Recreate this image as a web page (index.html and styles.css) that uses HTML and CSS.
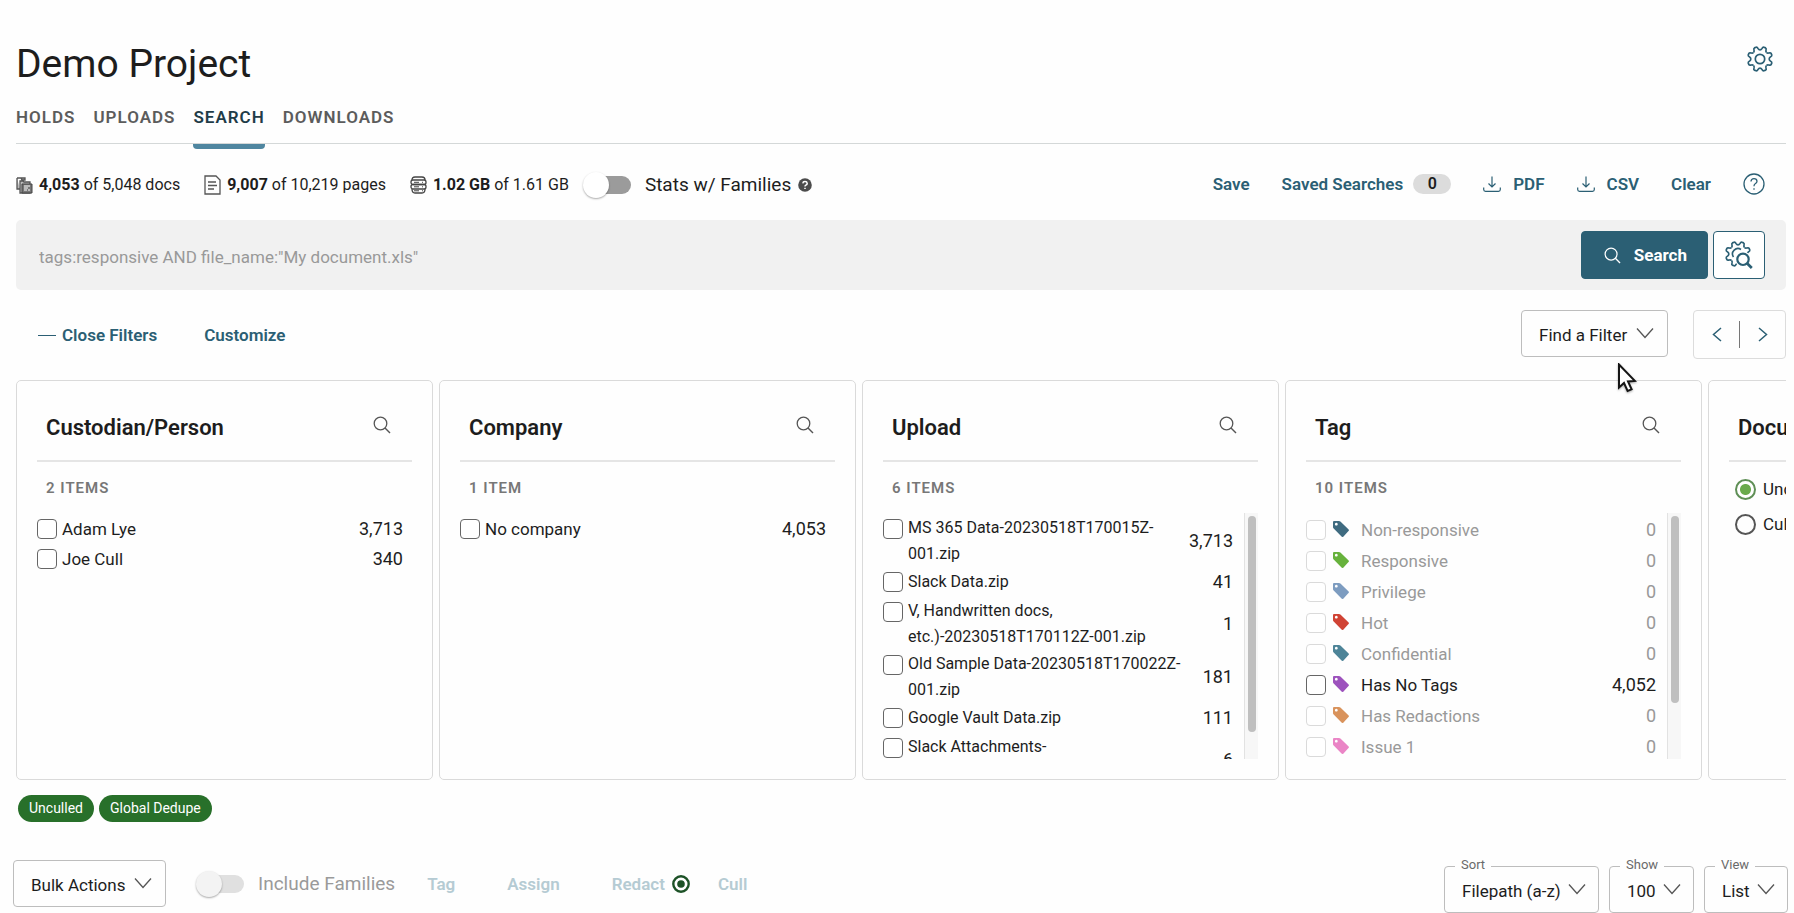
FILE: index.html
```html
<!DOCTYPE html>
<html lang="en">
<head>
<meta charset="utf-8">
<title>Demo Project</title>
<link rel="stylesheet" href="styles.css">
</head>
<body>
<svg class="defs" aria-hidden="true">
  <symbol id="chevron" viewBox="0 0 18 12"><path d="M1 1.500 9 10.500 17 1.500" fill="none" stroke="currentColor" stroke-width="1.300"/></symbol>
  <symbol id="lens" viewBox="0 0 18 18"><circle cx="7.500" cy="7.500" r="6.300" fill="none" stroke="currentColor" stroke-width="1.300"/><path d="M12 12 17 17" stroke="currentColor" stroke-width="1.400"/></symbol>
  <symbol id="download" viewBox="0 0 18 16"><path d="M9 .5V11M5.500 7.500 9 11l3.500-3.500M.7 11.500v2q0 1.800 1.800 1.800h13q1.800 0 1.800-1.800v-2" fill="none" stroke="currentColor" stroke-width="1.200"/></symbol>
  <symbol id="tagicon" viewBox="0 0 16 16"><path fill="currentColor" fill-rule="evenodd" d="M0 1Q0 0 1 0h5q.8 0 1.400.6l8 7.600q1 1 .1 1.900l-5 5.300q-1 1-2 .1L.7 7.600Q0 7 0 6ZM3.300 1.800a1.400 1.400 0 1 0 .01 0Z"/></symbol>
</svg>
<div class="page">
  <header class="header">
    <h1 class="title">Demo Project</h1>
    <button class="icon-button" aria-label="Project settings">
      <svg width="28" height="28" viewBox="-14 -14 28 28">
        <g id="gear-top">
          <g transform="rotate(-157.500)"><path id="t" d="M-3.500-8.500Q-2.400-8.950-2.200-10.300-2-12.300-.9-12.400H.9Q2-12.300 2.200-10.300 2.400-8.950 3.500-8.500" fill="none" stroke="currentColor" stroke-width="1.700"/></g>
          <use href="#t" transform="rotate(-112.500)"/><use href="#t" transform="rotate(-67.500)"/><use href="#t" transform="rotate(-22.500)"/><use href="#t" transform="rotate(22.500)"/><use href="#t" transform="rotate(67.500)"/>
        </g>
        <use href="#t" transform="rotate(112.500)"/><use href="#t" transform="rotate(157.500)"/>
        <circle r="4.700" fill="none" stroke="currentColor" stroke-width="1.700"/>
      </svg>
    </button>
  </header>

  <nav class="tabs">
    <a class="tab" href="#">HOLDS</a>
    <a class="tab" href="#">UPLOADS</a>
    <a class="tab tab-active" href="#">SEARCH</a>
    <a class="tab" href="#">DOWNLOADS</a>
  </nav>

  <section class="summary">
    <div class="stats">
      <span class="stat">
        <svg width="17" height="18" viewBox="0 0 17 18"><path d="M1 2V13h3M1 2h4l1 2h3V2H4M4 16V5h3l1 1h6v11H4Z" fill="#bbb" stroke="#555" stroke-width="1.300"/><path d="M6 8h10v9H6Z" fill="#777" stroke="#444"/><path d="M8 10h6M8 12h4M8 14h3M12 14h2" stroke="#fff"/></svg>
        <span><b>4,053</b> of 5,048 docs</span></span>
      <span class="stat">
        <svg width="17" height="20" viewBox="0 0 17 20"><path d="M1 1h11l4 4v14H1Z" fill="none" stroke="#555" stroke-width="1.300"/><path d="M4 7h8M4 10.500h9M4 14h6" stroke="#555" stroke-width="1.300"/></svg>
        <span><b>9,007</b> of 10,219 pages</span></span>
      <span class="stat">
        <svg width="17" height="18" viewBox="0 0 17 18"><g fill="none" stroke="#444" stroke-width="1.300"><path d="M2 4Q2 1 5 1h7q3 0 3 3"/><rect x="1" y="4" width="15" height="4.500" rx="2"/><rect x="1" y="8.500" width="15" height="4.500" rx="2"/><path d="M2 13Q2 17 5 17h7q3 0 3-4"/></g><path d="M4 6.300h5M12 6.300h1M4 10.800h5M12 10.800h1M4 14.800h5M12 14.800h1" stroke="#444"/></svg>
        <span><b>1.02 GB</b> of 1.61 GB</span></span>
      <label class="switch"><input type="checkbox" class="switch-input" role="switch"><span>Stats w/ Families</span></label>
      <svg class="hint" width="14" height="14" viewBox="0 0 14 14"><circle cx="7" cy="7" r="6.800" fill="#4c4c4c"/><path d="M4.800 5.400Q5 3.600 7 3.600T9.200 5.400Q9.200 6.500 7.900 7.100 7 7.500 7 8.400M7 9.700v1.400" fill="none" stroke="#fff" stroke-width="1.500"/></svg>
    </div>
    <div class="actions">
      <button class="link-button">Save</button>
      <button class="link-button">Saved Searches <span class="count-pill">0</span></button>
      <button class="link-button link-export"><svg width="18" height="16"><use href="#download"/></svg>PDF</button>
      <button class="link-button link-export"><svg width="18" height="16"><use href="#download"/></svg>CSV</button>
      <button class="link-button">Clear</button>
      <button class="icon-button" aria-label="Help"><svg width="22" height="22" viewBox="0 0 22 22"><circle cx="11" cy="11" r="10" fill="none" stroke="currentColor" stroke-width="1.300"/><path d="M8 8.500Q8.200 5.600 11 5.600T14 8.300Q14 9.800 12.200 10.800 11 11.500 11 13.200M11 15.200v1.500" fill="none" stroke="currentColor" stroke-width="1.300"/></svg></button>
    </div>
  </section>

  <form class="search-bar">
    <input class="search-input" type="text" aria-label="Search query" placeholder="tags:responsive AND file_name:&quot;My document.xls&quot;">
    <button class="search-submit" type="button"><svg width="17" height="17"><use href="#lens"/></svg>Search</button>
    <button class="search-advanced" type="button" aria-label="Advanced search">
      <svg width="30" height="30" viewBox="-14 -14 30 30"><use href="#gear-top"/><circle cx="5" cy="5.300" r="8" fill="#fff"/><path d="M-4.500 3A5.400 5.400 0 0 1 3-4.500" fill="none" stroke="currentColor" stroke-width="1.600"/><circle cx="5" cy="5.300" r="5.700" fill="none" stroke="currentColor" stroke-width="2.200"/><path d="M9 9.300 13.800 14" stroke="currentColor" stroke-width="2.800"/></svg>
    </button>
  </form>

  <section class="filter-bar">
    <button class="link-button close-filters"><span class="dash"></span>Close Filters</button>
    <button class="link-button">Customize</button>
    <span class="select-box find-filter"><select class="select" aria-label="Find a Filter"><option>Find a Filter</option></select><svg class="select-arrow" width="18" height="12"><use href="#chevron"/></svg></span>
    <div class="pager">
      <button class="pager-button" aria-label="Previous filters"><svg width="10" height="15" viewBox="0 0 10 15"><path d="M9 1 1.500 7.500 9 14" fill="none" stroke="currentColor" stroke-width="1.500"/></svg></button>
      <button class="pager-button" aria-label="Next filters"><svg width="10" height="15" viewBox="0 0 10 15"><path d="M1 1 8.500 7.500 1 14" fill="none" stroke="currentColor" stroke-width="1.500"/></svg></button>
    </div>
  </section>

  <section class="cards">
    <article class="card">
      <header class="card-header"><h2 class="card-title">Custodian/Person</h2><button class="card-search" aria-label="Search custodians"><svg width="18" height="18"><use href="#lens"/></svg></button></header>
      <p class="card-count">2 ITEMS</p>
      <div class="list-area"><ul class="list">
        <li class="item"><label class="item-label"><input type="checkbox" class="box">Adam Lye</label><span class="item-count">3,713</span></li>
        <li class="item"><label class="item-label"><input type="checkbox" class="box">Joe Cull</label><span class="item-count">340</span></li>
      </ul></div>
    </article>
    <article class="card">
      <header class="card-header"><h2 class="card-title">Company</h2><button class="card-search" aria-label="Search companies"><svg width="18" height="18"><use href="#lens"/></svg></button></header>
      <p class="card-count">1 ITEM</p>
      <div class="list-area"><ul class="list">
        <li class="item"><label class="item-label"><input type="checkbox" class="box">No company</label><span class="item-count">4,053</span></li>
      </ul></div>
    </article>
    <article class="card">
      <header class="card-header"><h2 class="card-title">Upload</h2><button class="card-search" aria-label="Search uploads"><svg width="18" height="18"><use href="#lens"/></svg></button></header>
      <p class="card-count">6 ITEMS</p>
      <div class="list-area"><ul class="list list-files">
        <li class="item item-wrap"><label class="item-label"><input type="checkbox" class="box"><span>MS 365 Data-20230518T170015Z-<wbr>001.zip</span></label><span class="item-count">3,713</span></li>
        <li class="item"><label class="item-label"><input type="checkbox" class="box">Slack Data.zip</label><span class="item-count">41</span></li>
        <li class="item item-wrap"><label class="item-label"><input type="checkbox" class="box"><span>V, Handwritten docs,<br>etc.)-20230518T170112Z-001.zip</span></label><span class="item-count">1</span></li>
        <li class="item item-wrap"><label class="item-label"><input type="checkbox" class="box"><span>Old Sample Data-20230518T170022Z-<wbr>001.zip</span></label><span class="item-count">181</span></li>
        <li class="item"><label class="item-label"><input type="checkbox" class="box">Google Vault Data.zip</label><span class="item-count">111</span></li>
        <li class="item item-wrap"><label class="item-label"><input type="checkbox" class="box"><span>Slack Attachments-<br>001.zip</span></label><span class="item-count">6</span></li>
      </ul><div class="track"><div class="thumb thumb-long"></div></div></div>
    </article>
    <article class="card">
      <header class="card-header"><h2 class="card-title">Tag</h2><button class="card-search" aria-label="Search tags"><svg width="18" height="18"><use href="#lens"/></svg></button></header>
      <p class="card-count">10 ITEMS</p>
      <div class="list-area"><ul class="list list-tags">
        <li class="item item-off"><label class="item-label"><input type="checkbox" class="box" disabled><svg class="tag-icon c-navy"><use href="#tagicon"/></svg>Non-responsive</label><span class="item-count">0</span></li>
        <li class="item item-off"><label class="item-label"><input type="checkbox" class="box" disabled><svg class="tag-icon c-green"><use href="#tagicon"/></svg>Responsive</label><span class="item-count">0</span></li>
        <li class="item item-off"><label class="item-label"><input type="checkbox" class="box" disabled><svg class="tag-icon c-blue"><use href="#tagicon"/></svg>Privilege</label><span class="item-count">0</span></li>
        <li class="item item-off"><label class="item-label"><input type="checkbox" class="box" disabled><svg class="tag-icon c-red"><use href="#tagicon"/></svg>Hot</label><span class="item-count">0</span></li>
        <li class="item item-off"><label class="item-label"><input type="checkbox" class="box" disabled><svg class="tag-icon c-teal"><use href="#tagicon"/></svg>Confidential</label><span class="item-count">0</span></li>
        <li class="item"><label class="item-label"><input type="checkbox" class="box"><svg class="tag-icon c-purple"><use href="#tagicon"/></svg>Has No Tags</label><span class="item-count">4,052</span></li>
        <li class="item item-off"><label class="item-label"><input type="checkbox" class="box" disabled><svg class="tag-icon c-orange"><use href="#tagicon"/></svg>Has Redactions</label><span class="item-count">0</span></li>
        <li class="item item-off"><label class="item-label"><input type="checkbox" class="box" disabled><svg class="tag-icon c-pink"><use href="#tagicon"/></svg>Issue 1</label><span class="item-count">0</span></li>
      </ul><div class="track"><div class="thumb thumb-short"></div></div></div>
    </article>
    <article class="card">
      <header class="card-header"><h2 class="card-title">Document</h2></header>
      <div class="radios">
        <label class="radio-label"><input type="radio" name="state" class="radio" checked>Unculled</label>
        <label class="radio-label"><input type="radio" name="state" class="radio">Culled</label>
      </div>
    </article>
  </section>

  <div class="chips"><span class="chip">Unculled</span><span class="chip">Global Dedupe</span></div>

  <footer class="toolbar">
    <span class="select-box"><select class="select" aria-label="Bulk Actions"><option>Bulk Actions</option></select><svg class="select-arrow" width="18" height="12"><use href="#chevron"/></svg></span>
    <label class="switch switch-off"><input type="checkbox" class="switch-input" role="switch" disabled><span>Include Families</span></label>
    <div class="bulk-links">
      <button class="link-button" disabled>Tag</button>
      <button class="link-button" disabled>Assign</button>
      <button class="link-button redact" disabled>Redact <svg width="18" height="18" viewBox="0 0 18 18"><circle cx="9" cy="9" r="7.700" fill="#fff" stroke="#1d5227" stroke-width="2.400"/><circle cx="9" cy="9" r="3.800" fill="#1d5227"/></svg></button>
      <button class="link-button" disabled>Cull</button>
    </div>
    <div class="view-options">
      <span class="select-box"><label class="select-label" for="sort">Sort</label><select class="select" id="sort"><option>Filepath (a-z)</option></select><svg class="select-arrow" width="18" height="12"><use href="#chevron"/></svg></span>
      <span class="select-box"><label class="select-label" for="show">Show</label><select class="select" id="show"><option>100</option></select><svg class="select-arrow" width="18" height="12"><use href="#chevron"/></svg></span>
      <span class="select-box"><label class="select-label" for="view">View</label><select class="select" id="view"><option>List</option></select><svg class="select-arrow" width="18" height="12"><use href="#chevron"/></svg></span>
    </div>
  </footer>

  <svg class="pointer" width="20" height="30" viewBox="0 0 20 30"><path d="M2 1.500V24.500l5-4.500 3.600 8 4-1.700-3.600-7.800 7-.5Z" fill="#fff" stroke="#151515" stroke-width="2"/></svg>
</div>
</body>
</html>
```
FILE: styles.css
```css
* { box-sizing: border-box; }
body {
  margin: 0;
  background: #fefefe;
  color: #1d1d1d;
  font: 18px/26px Roboto, sans-serif;
  overflow: hidden;
}
button, select, input { font: inherit; color: inherit; margin: 0; }
button { background: none; border: 0; padding: 0; }
svg { display: block; flex: none; }
.defs { position: absolute; width: 0; height: 0; }
.page { position: relative; padding: 36px 8px 0 16px; }

.header { display: flex; justify-content: space-between; align-items: flex-start; padding-right: 12px; }
.title { margin: 0; font-size: 39px; line-height: 56px; font-weight: 400; }
.icon-button { color: #2b5f74; }
.header .icon-button { padding-top: 9px; }

.tabs { display: flex; gap: 18px; padding-top: 8px; height: 52px; border-bottom: 1px solid #d4d8d8; }
.tab {
  height: 49px;
  padding-top: 4px;
  color: #5c5c5c;
  font-size: 17px;
  font-weight: 600;
  letter-spacing: 1px;
  text-decoration: none;
}
.tab-active { color: #1f3c48; border-bottom: 5px solid #4f86a0; border-radius: 0 0 4px 4px; }

.summary { display: flex; justify-content: space-between; height: 76px; padding-top: 6px; align-items: center; }
.stats { display: flex; align-items: center; gap: 24px; font-size: 16px; }
.stat { display: flex; align-items: center; gap: 6px; white-space: nowrap; }
.stat b { font-weight: 700; }
.switch { display: flex; align-items: center; gap: 14px; font-size: 19px; white-space: nowrap; }
.stats .switch { margin: 0 -17px 0 -10px; }
.switch-input {
  appearance: none;
  position: relative;
  width: 48px;
  height: 26px;
}
.switch-input::before {
  content: "";
  position: absolute;
  inset: 4px 0 4px 8px;
  border-radius: 9px;
  background: #9b9b9b;
}
.switch-input::after {
  content: "";
  position: absolute;
  inset: 0 auto 0 0;
  width: 26px;
  border-radius: 50%;
  background: #fff;
  box-shadow: 0 1px 2px #0005;
}
.switch-off { color: #9a9a9a; }
.switch-off .switch-input::before { background: #e0e0e0; }
.switch-off .switch-input::after { background: #f3f3f3; }
.actions { display: flex; align-items: center; gap: 32px; padding: 0 21px 2px 0; }
.link-button {
  display: flex;
  align-items: center;
  gap: 10px;
  color: #2b5f74;
  font-size: 17px;
  font-weight: 600;
  white-space: nowrap;
}
.link-export { gap: 12px; }
.count-pill {
  width: 38px;
  border-radius: 10px;
  background: #dcdcdc;
  color: #1d1d1d;
  font-size: 16px;
  line-height: 20px;
}

.search-bar {
  display: flex;
  gap: 5px;
  padding: 11px 21px 11px 23px;
  background: #f1f1f1;
  border-radius: 5px;
}
.search-input { flex: 1; min-width: 0; border: 0; padding: 3px 0 0; background: none; font-size: 17px; }
.search-input::placeholder { color: #999; opacity: 1; }
.search-submit, .search-advanced {
  display: flex;
  align-items: center;
  justify-content: center;
  height: 48px;
  border: 1px solid #2b5f74;
  border-radius: 4px;
}
.search-submit { gap: 13px; padding: 0 20px 0 22px; background: #2b5f74; color: #fff; font-size: 17px; font-weight: 700; }
.search-advanced { width: 52px; background: #fff; color: #2b5f74; }

.filter-bar { display: flex; align-items: flex-start; padding: 20px 0 0 22px; gap: 47px; }
.filter-bar .link-button { height: 50px; }
.close-filters { gap: 6px; }
.dash { width: 18px; height: 1px; background: #2b5f74; }
.select-box { position: relative; display: block; }
.select {
  appearance: none;
  display: block;
  height: 47px;
  padding: 2px 39px 0 17px;
  border: 1px solid #bdbdbd;
  border-radius: 4px;
  background: transparent;
  font-size: 17px;
}
.select-arrow { position: absolute; right: 14px; top: 17px; color: #555; pointer-events: none; }
.select-label {
  position: absolute;
  top: -10px;
  left: 11px;
  padding: 0 6px;
  background: #fefefe;
  color: #6a6a6a;
  font-size: 13px;
  line-height: 18px;
}
.find-filter { margin-left: auto; margin-right: -22px; }
.pager { display: flex; align-items: center; width: 93px; height: 49px; border: 1px solid #dcdcdc; border-radius: 4px; }
.pager-button { flex: 1; height: 27px; display: flex; align-items: center; justify-content: center; color: #2b5f74; }
.pager-button + .pager-button { border-left: 1px solid #777; }

.cards {
  display: grid;
  grid-auto-flow: column;
  grid-auto-columns: 23.560%;
  gap: 6px;
  margin-top: 20px;
  overflow: hidden;
}
.card { height: 400px; padding: 28px 20px 0; border: 1px solid #dadada; border-radius: 5px; }
.card-header { display: flex; justify-content: space-between; height: 53px; padding: 5px 21px 0 9px; border-bottom: 2px solid #e5e5e5; }
.card-title { margin: 0; font-size: 22px; line-height: 28px; font-weight: 600; white-space: nowrap; }
.card-search { align-self: flex-start; padding-top: 2px; color: #555; }
.card-count { margin: 13px 0 12px 9px; color: #777; font-size: 15px; font-weight: 600; letter-spacing: 1px; }
.list-area { display: flex; height: 246px; gap: 11px; overflow: hidden; }
.list { flex: 1; margin: 0; padding: 1px 0 0; list-style: none; }
.list:last-child { padding-right: 9px; }
.item { display: flex; align-items: center; gap: 6px; }
.item-label { flex: 1; display: flex; align-items: flex-start; gap: 5px; padding: 2px 0; font-size: 17px; }
.item-count { font-size: 18px; }
.item-off { color: #999; }
.list-files .item-label { font-size: 16px; }
.list-files .item-wrap .item-label { padding: 1px 0 0; }
.item-wrap .box { margin-top: 4px; }
.list-tags .item { padding: 1px 0 0; }
.box {
  appearance: none;
  flex: none;
  width: 20px;
  height: 20px;
  margin-top: 3px;
  border: 1px solid #666;
  border-radius: 4px;
  background: #fff;
}
.box:disabled { border-color: #dadada; }
.tag-icon { width: 16px; height: 16px; margin: 4px 7px 0 2px; }
.c-navy { color: #3f6b80; }
.c-green { color: #67b23c; }
.c-blue { color: #7d9cc0; }
.c-red { color: #d04334; }
.c-teal { color: #4d8498; }
.c-purple { color: #9d52bd; }
.c-orange { color: #d9935c; }
.c-pink { color: #ea85c6; }
.track { width: 14px; padding: 3px 2px 0 3px; border-left: 1px solid #e2e2e2; background: #f7f7f7; }
.thumb { border-radius: 4px; background: #bfbfbf; }
.thumb-long { height: 216px; }
.thumb-short { height: 187px; }
.radios { display: flex; flex-direction: column; gap: 9px; padding: 14px 0 0 6px; }
.radio-label { display: flex; align-items: center; gap: 7px; font-size: 17px; }
.radio { appearance: none; width: 21px; height: 21px; border: 2px solid #555; border-radius: 50%; }
.radio:checked { border-color: #5f8f56; background: radial-gradient(#6aaa4c 5px, #fff 6px); }

.chips { display: flex; gap: 5px; padding: 15px 2px 0; }
.chip { padding: 0 11px; border-radius: 14px; background: #28702a; color: #fff; font-size: 14px; line-height: 27px; }

.toolbar { display: flex; align-items: flex-start; margin: 38px -2px 0 -3px; }
.toolbar .switch { margin-left: 30px; height: 48px; }
.bulk-links { display: flex; gap: 52px; height: 48px; padding-left: 32px; }
.bulk-links .link-button { color: #b5cbd3; }
.bulk-links .redact { gap: 7px; margin-right: -24px; }
.view-options { display: flex; gap: 10px; margin-left: auto; padding-top: 6px; }
.view-options .select { padding-right: 37px; }
.view-options .select-arrow { right: 13px; }

.pointer { position: absolute; top: 363px; right: 157px; filter: drop-shadow(0 1px 1px #0005); }
```
